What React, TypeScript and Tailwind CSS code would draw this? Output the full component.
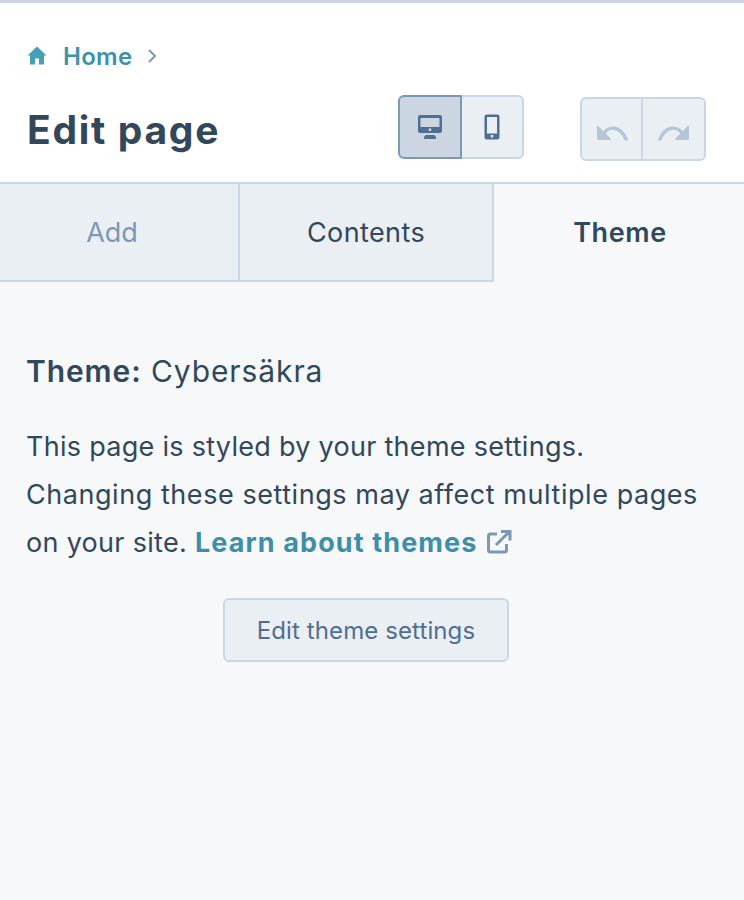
import React from "react";

function Home() {
  return (
    <svg width="20" height="20" viewBox="0 0 20 20" className="fill-[#459fb8] block">
      <path d="M10 0.500 L0.500 9.500 L3 9.500 L3 18.500 L8 18.500 L8 12.500 L12 12.500 L12 18.500 L17 18.500 L17 9.500 L19.500 9.500 Z" />
    </svg>
  );
}

function Desktop() {
  return (
    <svg width="26" height="26" viewBox="0 0 26 26" className="block">
      <path fillRule="evenodd" fill="#516f90" d="M3 1 H23 A2 2 0 0 1 25 3 V17 A2 2 0 0 1 23 19 H3 A2 2 0 0 1 1 17 V3 A2 2 0 0 1 3 1 Z M3.500 4 V13 H22.500 V4 Z M11.800 14.500 V17 H14.200 V14.500 Z" />
      <path fill="#516f90" d="M9.500 21 H16.500 C18 21 19 22 19 24.500 Q19 25 18 25 H8 Q7 25 7 24.500 C7 22 8 21 9.500 21 Z" />
    </svg>
  );
}

function Phone() {
  return (
    <svg width="16" height="26" viewBox="0 0 16 26" className="block">
      <path fillRule="evenodd" fill="#516f90" d="M3 0.500 H13 A2.500 2.500 0 0 1 15.500 3 V23 A2.500 2.500 0 0 1 13 25.500 H3 A2.500 2.500 0 0 1 0.500 23 V3 A2.500 2.500 0 0 1 3 0.500 Z M3 3 V19.500 H13 V3 Z M6.800 21 V23.400 H9.200 V21 Z" />
    </svg>
  );
}

function Undo({ flip }: { flip?: boolean }) {
  return (
    <svg width="32" height="16" viewBox="0 0 32 16" className={flip ? "block -scale-x-100" : "block"}>
      <path d="M7 9 C13 0.500 24 0.500 30 14" fill="none" stroke="#b6c4d5" strokeWidth="3.400" strokeLinecap="round" />
      <path d="M1.500 1 Q1 1 1 2 V13.500 Q1 15 2.500 15 H14.500 Q15.500 14.500 14.500 13.500 L2.500 1.200 Z" fill="#b6c4d5" />
    </svg>
  );
}

function External() {
  return (
    <svg width="26" height="26" viewBox="0 0 26 26" className="block">
      <path d="M11 5 H4.500 A2 2 0 0 0 2.500 7 V21 A2 2 0 0 0 4.500 23 H18.500 A2 2 0 0 0 20.500 21 V15" fill="none" stroke="#7c98b6" strokeWidth="3" />
      <path d="M10 16 L23 3 M15 2.500 H24 V11.500" fill="none" stroke="#7c98b6" strokeWidth="3" />
    </svg>
  );
}

export default function App() {
  return (
    <div className="w-[744px] h-[900px] overflow-hidden bg-[#f6f8fa] text-[#33475b] font-['Inter','Liberation_Sans',sans-serif] flex flex-col">
      <header className="h-[184px] bg-white border-t-[3px] border-b-2 border-[#cbd6e2] pl-[27px] pr-[38px] flex flex-col">
        <nav className="flex items-center mt-[39px] h-[28px] text-[#3e92ac] font-semibold text-[24px]">
          <Home />
          <span className="ml-[16px] mt-[2px] tracking-[0.3px]">Home</span>
          <svg width="10" height="16" viewBox="0 0 10 16" className="ml-[14px] block">
            <path d="M2 2 L8 8 L2 14" fill="none" stroke="#7c98b6" strokeWidth="2" />
          </svg>
        </nav>
        <div className="flex items-start mt-[25px] h-[66px]">
          <h1 className="font-bold text-[39px] tracking-[1.7px] text-[#33475b] leading-[70px]">Edit page</h1>
          <div className="ml-auto flex">
            <div className="w-[64px] h-[64px] bg-[#cbd6e2] border-2 border-[#7c98b6] rounded-l-[6px] flex items-center justify-center"><Desktop /></div>
            <div className="w-[62px] h-[64px] bg-[#eaeff4] border-2 border-l-0 border-[#cbd6e2] rounded-r-[6px] flex items-center justify-center"><Phone /></div>
          </div>
          <div className="ml-[56px] flex mt-[2px]">
            <div className="w-[63px] h-[64px] bg-[#eaeff4] border-2 border-[#cbd6e2] rounded-l-[6px] flex items-center justify-center pt-[8px]"><Undo /></div>
            <div className="w-[63px] h-[64px] bg-[#eaeff4] border-2 border-l-0 border-[#cbd6e2] rounded-r-[6px] flex items-center justify-center pt-[8px]"><Undo flip /></div>
          </div>
        </div>
      </header>
      <div className="flex h-[98px] text-[27px]">
        <div className="w-[240px] bg-[#eaeff4] border-r-2 border-b-2 border-[#cbd6e2] flex items-center justify-center pr-[14px] pt-[2px] text-[#7c98b6]">Add</div>
        <div className="w-[254px] bg-[#eaeff4] border-r-2 border-b-2 border-[#cbd6e2] flex items-center justify-center pt-[2px] tracking-[0.4px]">Contents</div>
        <div className="flex-1 flex items-center justify-center pl-[2px] pt-[1px] font-semibold tracking-[0.6px]">Theme</div>
      </div>
      <main className="pl-[26px] pr-[38px] pt-[65px]">
        <p className="text-[30px] leading-[48px] tracking-[0.9px]"><strong className="font-semibold">Theme:</strong> Cybersäkra</p>
        <p className="mt-[28px] text-[27px] leading-[48px]">
          <span className="tracking-[0.28px]">This page is styled by your theme settings.</span><br />
          <span className="tracking-[0.55px]">Changing these settings may affect multiple pages</span><br />
          <span className="tracking-[0.3px]">on your site. </span><a className="font-bold tracking-[1.1px] text-[#3e8ea8]">Learn about themes</a>
          <span className="inline-block align-[-3px] ml-[8px]"><External /></span>
        </p>
        <div className="flex justify-center mt-[31px]">
          <button className="w-[286px] h-[64px] bg-[#eaeff4] border-2 border-[#cbd6e2] rounded-[6px] pt-[2px] text-[24px] tracking-[0.1px] text-[#506e91]">Edit theme settings</button>
        </div>
      </main>
    </div>
  );
}
